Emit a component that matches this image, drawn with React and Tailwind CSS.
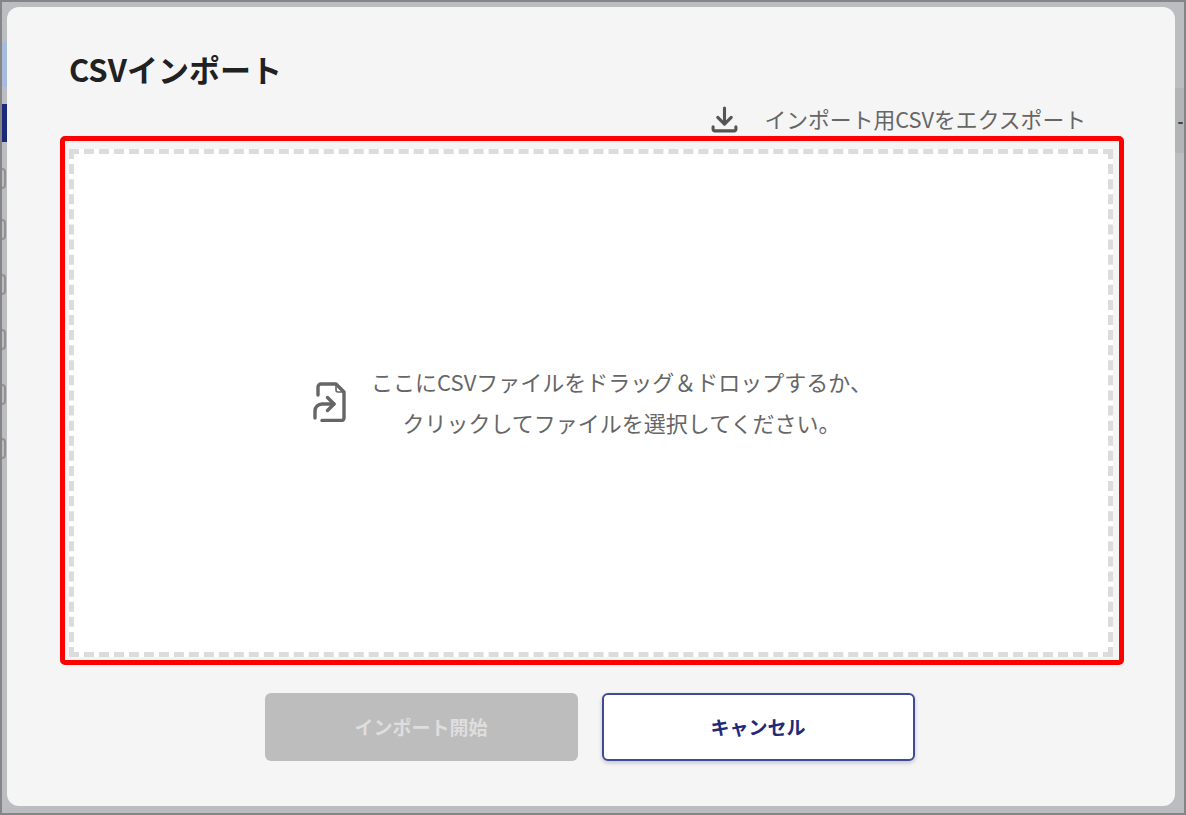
import React from 'react'

const FONT = "font-['Noto_Sans_CJK_JP','Noto_Sans',sans-serif]"

// slivers of the page behind the dialog, visible along the left edge
const handleRows = [166, 217, 272, 327, 382, 436]

function DownloadIcon() {
  return (
    <svg width="29" height="29" viewBox="0 0 28 28" fill="none" stroke="#555" strokeWidth="3" strokeLinecap="round" strokeLinejoin="round">
      <path d="M14 3v15" />
      <path d="M7.5 12l6.5 6.5L20.5 12" />
      <path d="M3 21v2.5a1.5 1.5 0 0 0 1.5 1.5h19a1.5 1.5 0 0 0 1.5-1.5V21" />
    </svg>
  )
}

function FileImportIcon() {
  return (
    <svg width="34" height="40" viewBox="0 0 34 40" fill="none" stroke="#666" strokeWidth="3.4" strokeLinecap="round" strokeLinejoin="round">
      <path d="M5 13V5a3 3 0 0 1 3-3h15l8 8v26a2.5 2.5 0 0 1-2.5 2.5H9" />
      <path d="M23 3v5a2 2 0 0 0 2 2h5" strokeWidth="1.6" />
      <path d="M2 36v-7a7 7 0 0 1 7-7h12" />
      <path d="M14.5 15.5L21 22l-6.5 6.5" />
    </svg>
  )
}

export default function App() {
  return (
    <div className={`${FONT} relative h-[815px] w-[1186px] overflow-hidden border-2 border-[#858585] bg-[#bcbdc1] p-[5px]`}>
      <div className="absolute left-0 top-[40px] h-[45px] w-[5px] bg-[#a9bbdc]" />
      <div className="absolute left-0 top-[102px] h-[38px] w-[5px] bg-[#1c2a78]" />
      {handleRows.map((top) => (
        <div key={top} className="absolute left-0 h-[21px] w-[4px] rounded-r-sm border-2 border-l-0 border-[#929292]" style={{ top }} />
      ))}
      <div className="absolute right-0 top-[86px] h-[65px] w-[9px] bg-[#b3b4b8]" />
      <div className="absolute right-[1px] top-[120px] h-[2px] w-[5px] rounded-full bg-[#444]" />

      <div className="relative flex h-[799px] w-[1168px] flex-col rounded-xl bg-[#f5f5f5] pl-[53px] pr-[51px]">
        <h1 className="mt-[40px] pl-[9px] text-[31px] font-bold leading-[44px] text-[#212121]">CSVインポート</h1>

        <div className="mt-[12px] mb-[1px] flex h-[32px] items-center justify-end pr-[38px] text-[#666]">
          <DownloadIcon />
          <span className="ml-[25px] text-[21.8px] leading-[32px]">インポート用CSVをエクスポート</span>
        </div>

        <div className="h-[529px] rounded-[5px] border-[5px] border-[#ff0000] pb-[3px] pl-[4px] pr-[6px] pt-[8px]">
          <div className="flex h-full items-center justify-center border-[5px] border-dashed border-[#dcdcdc] bg-white pl-[3px]">
            <div className="flex items-center pb-[3px]">
              <FileImportIcon />
              <p className="ml-[24px] text-center text-[22px] leading-[41px] text-[#666]">
                ここにCSVファイルをドラッグ＆ドロップするか、
                <br />
                クリックしてファイルを選択してください。
              </p>
            </div>
          </div>
        </div>

        <div className="mt-[28px] flex justify-center gap-[24px] pr-[5px]">
          <button className="h-[68px] w-[313px] rounded-md bg-[#bdbdbd] text-[19px] font-bold text-[#dedede]">インポート開始</button>
          <button className="h-[68px] w-[313px] rounded-md border-2 border-[#3f4a98] bg-white text-[19px] font-bold text-[#1f2a78] shadow-[0_2px_4px_rgba(0,0,0,0.2)]">キャンセル</button>
        </div>
      </div>
    </div>
  )
}
